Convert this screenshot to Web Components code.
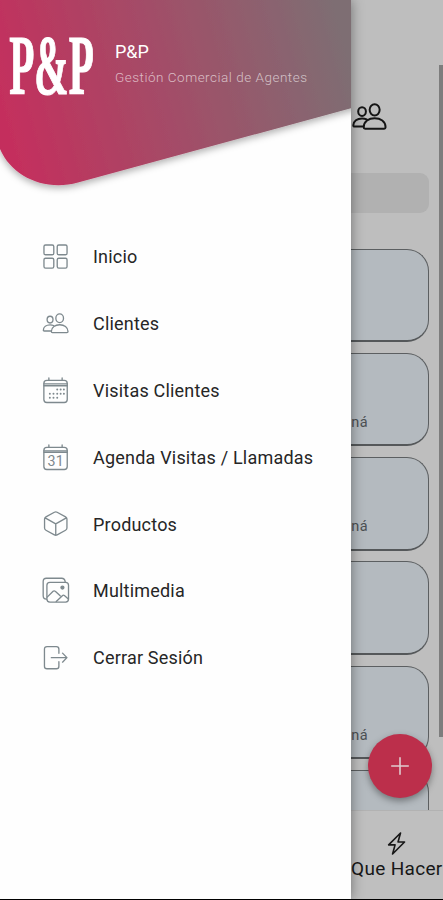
<!DOCTYPE html>
<html lang="es">
<head>
<meta charset="utf-8">
<title>P&amp;P</title>
<style>
html,body{margin:0;height:100%;overflow:hidden;background:#000}
body{font-family:Roboto,"Noto Sans",sans-serif}
</style>
</head>
<body>
<app-shell></app-shell>
<script>
const define = (name, html, setup) => customElements.define(name, class extends HTMLElement {
  constructor() {
    super();
    const t = document.createElement('template');
    t.innerHTML = html;
    this.attachShadow({mode: 'open'}).appendChild(t.content.cloneNode(true));
  }
  connectedCallback() { if (setup) setup(this, this.shadowRoot); }
});

const people = '<g transform="translate(0 .8)"><ellipse cx="8.2" cy="9" rx="3" ry="3.4"/><ellipse cx="18" cy="7.6" rx="3.9" ry="4.4"/><path d="M9.500 21.200c0-4.600 4-7 8.500-7s8.500 2.400 8.500 7c0 .8-.4 1.100-1.100 1.100H10.600c-.7 0-1.100-.3-1.100-1.100zM9.200 20.600H2.300c-.6 0-.9-.3-.9-.9 0-3.400 3.100-5.400 6.800-5.400 1.400 0 2.500.2 3.600.7"/></g>';
const icons = {
  grid: '<rect x="2" y="2" width="10" height="10" rx="1.600"/><rect x="15.500" y="2" width="10" height="10" rx="1.600"/><rect x="2" y="15.500" width="10" height="10" rx="1.600"/><rect x="15.500" y="15.500" width="10" height="10" rx="1.600"/>',
  people,
  days: '<rect x="1.900" y="3.500" width="23.800" height="22.500" rx="3"/><path d="M7 1v2.500M20.500 1v2.500M2 8.900h23.700M2 7h23.700"/><g fill="currentColor" stroke="none"><circle cx="15.500" cy="12.800" r="1"/><circle cx="19" cy="12.800" r="1"/><circle cx="22.300" cy="12.800" r="1"/><circle cx="8" cy="17" r="1"/><circle cx="11.700" cy="17" r="1"/><circle cx="15.500" cy="17" r="1"/><circle cx="19" cy="17" r="1"/><circle cx="22.300" cy="17" r="1"/><circle cx="8" cy="21.200" r="1"/><circle cx="11.700" cy="21.200" r="1"/><circle cx="15.500" cy="21.200" r="1"/></g>',
  date: '<rect x="1.900" y="3.500" width="23.800" height="22.500" rx="3"/><path d="M7 1v2.500M20.500 1v2.500M2 8.500h23.700M2 7h23.700"/><text x="14" y="22.600" text-anchor="middle" font-family="Roboto,sans-serif" font-size="14.500" fill="currentColor" stroke="none">31</text>',
  cube: '<path d="M12.600 2.300 4 7c-.9.5-1.400 1.200-1.400 2.200v9.200c0 1 .5 1.700 1.400 2.200l8.600 4.800c.9.500 1.900.5 2.800 0l8.600-4.800c.9-.5 1.400-1.200 1.400-2.200V9.200c0-1-.5-1.700-1.400-2.200l-8.600-4.700c-.9-.5-1.900-.5-2.800 0zM3.200 8 14 14.200 24.800 8M14 14.200v11.500"/>',
  media: '<rect x="5" y="5.500" width="22" height="20" rx="3"/><path d="M4.500 22.500C2.400 22.400 1.200 21 1.200 19V4.500c0-2 1.300-3.200 3.300-3.200h15.500c2 0 3.300 1.300 3.600 3.500M5.300 20.500l6-5.900c.7-.7 1.500-.7 2.200 0l5 4.600M14.500 25l6.200-6c.7-.7 1.400-.7 2.100-.1l4 3.500"/><circle cx="20.800" cy="10.800" r="1.500" fill="currentColor"/>',
  exit: '<path d="M17.200 9.500V5.300c0-1.700-.9-2.600-2.600-2.600H5.100c-1.700 0-2.600.9-2.600 2.600v17.300c0 1.700.9 2.600 2.600 2.600h9.500c1.700 0 2.600-.9 2.600-2.600V18M9.500 13.900h15.800M20.900 9.300l4.500 4.600-4.500 4.600"/>',
  bolt: '<path d="M18.500 2.200 5.200 15.500h7.200L9.600 25.800 23 12.300h-7.300z"/>',
  plus: '<path d="M14 3.500v21M3.500 14h21"/>'
};

define('line-icon', `<style>
:host{display:block;width:28px;height:28px;flex:none}
svg{display:block;width:100%;height:100%;overflow:visible;fill:none;stroke:currentColor;stroke-width:var(--stroke,1.35);stroke-linecap:round;stroke-linejoin:round}
</style><svg viewBox="0 0 28 28"></svg>`, (el, root) => {
  root.querySelector('svg').innerHTML = icons[el.getAttribute('name')];
});

define('menu-item', `<style>
:host{display:flex;align-items:center;height:66.850px;padding-left:42px;gap:23.500px;font-size:18px;letter-spacing:.2px;color:#262626;white-space:nowrap}
line-icon{width:27.500px;height:27.500px;color:#7e898e}
</style><span><slot></slot></span>`, (el, root) => {
  const icon = document.createElement('line-icon');
  icon.setAttribute('name', el.getAttribute('icon'));
  root.querySelector('span').before(icon);
});

define('drawer-header', `<style>
:host{display:grid;height:223.300px;color:#fff}
.bg,.row{grid-area:1/1}
.bg{width:351px;height:223px;display:block}
.row{display:flex;align-items:flex-start;gap:21px;padding-left:9px;z-index:1}
.logo{width:85px;height:70px;margin-top:30px;display:block;overflow:visible}
.info{padding-top:40px;display:flex;flex-direction:column;gap:5px;white-space:nowrap}
b{font-weight:400;font-size:18px;line-height:23px}
span{font-size:13.500px;line-height:18px;font-weight:300;letter-spacing:.51px;color:rgba(255,255,255,.62)}
</style>
<svg class="bg" viewBox="0 0 351 223">
<defs><linearGradient id="g" gradientUnits="userSpaceOnUse" x1="10" y1="135" x2="345" y2="45"><stop offset="0" stop-color="#c42f5d"/><stop offset="1" stop-color="#7e6e73"/></linearGradient>
<filter id="s" x="-10%" y="-10%" width="120%" height="130%"><feDropShadow dx="0" dy="3" stdDeviation="3.500" flood-color="#000" flood-opacity=".3"/></filter></defs>
<path filter="url(#s)" fill="url(#g)" d="M-20-20H371V103L351 108.300 78 182.500C45 191.500 12 177 0 149L-20 90z"/>
</svg>
<div class="row">
<svg class="logo" viewBox="0 0 85 70"><text transform="translate(.2 63.500) scale(.479 .985)" font-family="Liberation Serif,serif" font-weight="700" font-size="86" fill="#fff" stroke="#fff" stroke-width="1.200">P&amp;P</text></svg>
<div class="info"><b><slot name="name"></slot></b><span><slot name="detail"></slot></span></div>
</div>`);

define('nav-drawer', `<style>
:host{display:flex;flex-direction:column;width:351px;background:#fefefe;box-shadow:0 0 12px rgba(0,0,0,.42);overflow:visible}
nav{display:flex;flex-direction:column}
</style>
<drawer-header><span slot="name">P&amp;P</span><span slot="detail">Gestión Comercial de Agentes</span></drawer-header>
<nav>
<menu-item icon="grid">Inicio</menu-item>
<menu-item icon="people">Clientes</menu-item>
<menu-item icon="days">Visitas Clientes</menu-item>
<menu-item icon="date">Agenda Visitas / Llamadas</menu-item>
<menu-item icon="cube">Productos</menu-item>
<menu-item icon="media">Multimedia</menu-item>
<menu-item icon="exit">Cerrar Sesión</menu-item>
</nav>`);

define('client-card', `<style>
:host{display:flex;flex:none;box-sizing:border-box;height:93.500px;border:1px solid #5c5f61;border-bottom:2px solid #55585a;border-radius:22px;background:#b4babf;justify-content:flex-end;align-items:flex-end;padding:0 60px 12.500px 0;font-size:14.500px;line-height:18px;letter-spacing:.4px;color:#4c5053}
</style><slot></slot>`);

define('client-list', `<style>
:host{display:grid;grid-template-columns:1fr 4.500px;height:810px;overflow:hidden;background:#bebebe}
main{display:flex;flex-direction:column;padding-right:9.500px;min-width:0;height:810px;overflow:hidden}
header{display:flex;justify-content:flex-end;height:71px;padding:102px 40px 0 0;color:#151515;flex:none}
header line-icon{width:39px;height:36px;--stroke:1.550;margin-top:-3px}
.search{height:40px;flex:none;border-radius:9px;background:#b1b1b1;margin-bottom:35.500px}
.cards{display:flex;flex-direction:column;gap:10.800px}
.bar{margin-top:65px;height:672px;background:#7d7d7d}
</style>
<main><header><line-icon name="people"></line-icon></header><div class="search"></div>
<div class="cards"><client-card></client-card><client-card>ná</client-card><client-card>ná</client-card><client-card></client-card><client-card>ná</client-card><client-card></client-card></div></main>
<div class="bar"></div>`);

define('bottom-tab', `<style>
:host{display:flex;flex-direction:column;align-items:flex-end;height:88.500px;box-sizing:border-box;background:#bfbfbf;border-top:1px solid #b2b2b2;padding-top:20px;color:#171717;font-size:19px;line-height:22px;letter-spacing:.3px;white-space:nowrap}
line-icon{width:25px;height:25px;margin-right:34px;--stroke:1.800}
span{padding-right:.5px;margin-top:2px}
</style><line-icon name="bolt"></line-icon><span><slot></slot></span>`);

define('add-button', `<style>
:host{display:flex;align-items:center;justify-content:center;width:64px;height:64px;border-radius:50%;background:#bc2f4b;color:#e0cdd0;box-shadow:0 3px 7px rgba(0,0,0,.38)}
line-icon{width:22px;height:22px;--stroke:2}
</style><line-icon name="plus"></line-icon>`);

define('app-shell', `<style>
:host{display:block;position:relative;width:443px;height:898.500px;overflow:hidden;background:#bfbfbf}
add-button{position:absolute;right:11.500px;bottom:100.500px}
nav-drawer{position:absolute;left:0;top:0;bottom:0}
</style>
<client-list></client-list>
<bottom-tab>Que Hacer</bottom-tab>
<add-button></add-button>
<nav-drawer></nav-drawer>`);
</script>
</body>
</html>
